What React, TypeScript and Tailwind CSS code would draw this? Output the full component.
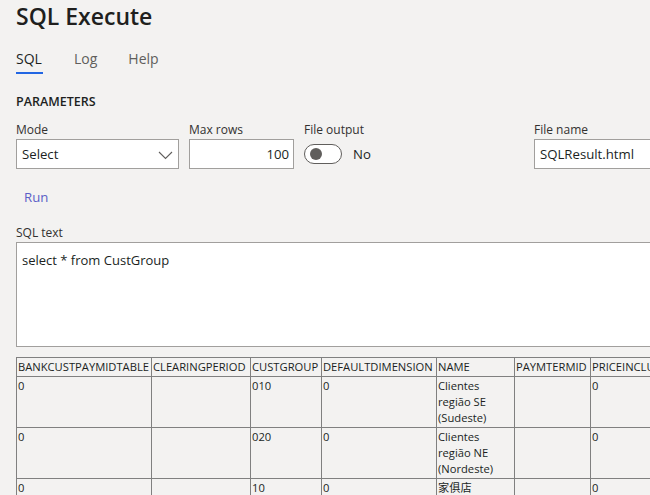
import React from "react";

const cols = [135, 99, 71, 115, 78, 76, 150, 100];
const headers = [
  "BANKCUSTPAYMIDTABLE",
  "CLEARINGPERIOD",
  "CUSTGROUP",
  "DEFAULTDIMENSION",
  "NAME",
  "PAYMTERMID",
  "PRICEINCLUDESALESTAX",
  "TAXGROUPID",
];
const rows: string[][] = [
  ["0", "", "010", "0", "Clientes região SE (Sudeste)", "", "0", ""],
  ["0", "", "020", "0", "Clientes região NE (Nordeste)", "", "0", ""],
  ["0", "", "10", "0", "家俱店", "", "0", ""],
];

export default function App() {
  return (
    <div
      className="w-[650px] h-[495px] overflow-hidden bg-[#f3f2f1] text-[#323130]"
      style={{ fontFamily: '"Open Sans", "Noto Sans CJK SC", sans-serif' }}
    >
      <div className="w-[1000px] pl-4">
        <h1 className="text-[23px] font-semibold leading-[32px] text-[#201f1e]">SQL Execute</h1>

        <div className="mt-[17px] flex gap-[31px] text-[14px] leading-[20px]">
          <div className="flex flex-col items-start">
            <span className="text-[#201f1e]">SQL</span>
            <span className="mt-[3px] h-[2px] w-[27px] bg-[#2266e3]" />
          </div>
          <span className="text-[#605e5c]">Log</span>
          <span className="text-[#605e5c]">Help</span>
        </div>

        <div className="mt-[20px] text-[12.5px] font-semibold leading-[16px] text-[#201f1e]">PARAMETERS</div>

        <div className="mt-[12px] flex items-start gap-[10px]">
          <div className="flex w-[163px] flex-col">
            <label className="text-[12px] leading-[16px]">Mode</label>
            <div className="mt-[1px] flex h-[30px] items-center justify-between border border-[#a19f9d] bg-white pl-[5px] pr-[4px] pt-[2px] text-[13.2px] text-[#201f1e]">
              <span>Select</span>
              <svg width="15" height="9" viewBox="0 0 15 9" className="mr-[1px]">
                <polyline points="1,1 7.5,7.5 14,1" fill="none" stroke="#605e5c" strokeWidth="1.1" />
              </svg>
            </div>
          </div>
          <div className="flex w-[105px] flex-col">
            <label className="text-[12px] leading-[16px]">Max rows</label>
            <div className="mt-[1px] flex h-[30px] items-center justify-end border border-[#a19f9d] bg-white pr-[4px] pt-[2px] text-[13.2px] text-[#201f1e]">
              100
            </div>
          </div>
          <div className="flex w-[220px] flex-col">
            <label className="text-[12px] leading-[16px]">File output</label>
            <div className="mt-[1px] flex h-[30px] items-center gap-[11px]">
              <div className="flex h-[20px] w-[38px] items-center rounded-full border border-[#605e5c] bg-white pl-[5px]">
                <span className="h-[12px] w-[12px] rounded-full bg-[#605e5c]" />
              </div>
              <span className="pt-[2px] text-[13.2px] text-[#201f1e]">No</span>
            </div>
          </div>
          <div className="flex w-[220px] flex-col">
            <label className="text-[12px] leading-[16px]">File name</label>
            <div className="mt-[1px] flex h-[30px] items-center border border-[#a19f9d] bg-white pl-[5px] pt-[2px] text-[13.2px] text-[#201f1e]">
              SQLResult.html
            </div>
          </div>
        </div>

        <div className="mt-[12px] flex h-[32px] items-center px-2 text-[13.2px] leading-[32px] text-[#5b5fc7]">Run</div>

        <div className="mt-[12px] text-[12px] leading-[16px]">SQL text</div>
        <div className="mt-[1px] h-[105px] w-[700px] border border-[#a19f9d] bg-white pl-[5px] pt-[7px] text-[13px] leading-[20px] text-[#201f1e]">
          select * from CustGroup
        </div>

        <table
          className="mt-[10px] table-fixed border-collapse text-[11.2px] leading-[16px] text-[#201f1e]"
          style={{ width: cols.reduce((a, b) => a + b, 0) }}
        >
          <colgroup>
            {cols.map((w, i) => (
              <col key={i} style={{ width: w }} />
            ))}
          </colgroup>
          <thead>
            <tr>
              {headers.map((h) => (
                <th key={h} className="overflow-hidden whitespace-nowrap border border-[#808080] p-[1px] text-left align-top font-normal">
                  {h}
                </th>
              ))}
            </tr>
          </thead>
          <tbody>
            {rows.map((r, ri) => (
              <tr key={ri}>
                {r.map((c, ci) => (
                  <td key={ci} className="border border-[#808080] p-[1px] align-top">
                    {c}
                  </td>
                ))}
              </tr>
            ))}
          </tbody>
        </table>
      </div>
    </div>
  );
}
